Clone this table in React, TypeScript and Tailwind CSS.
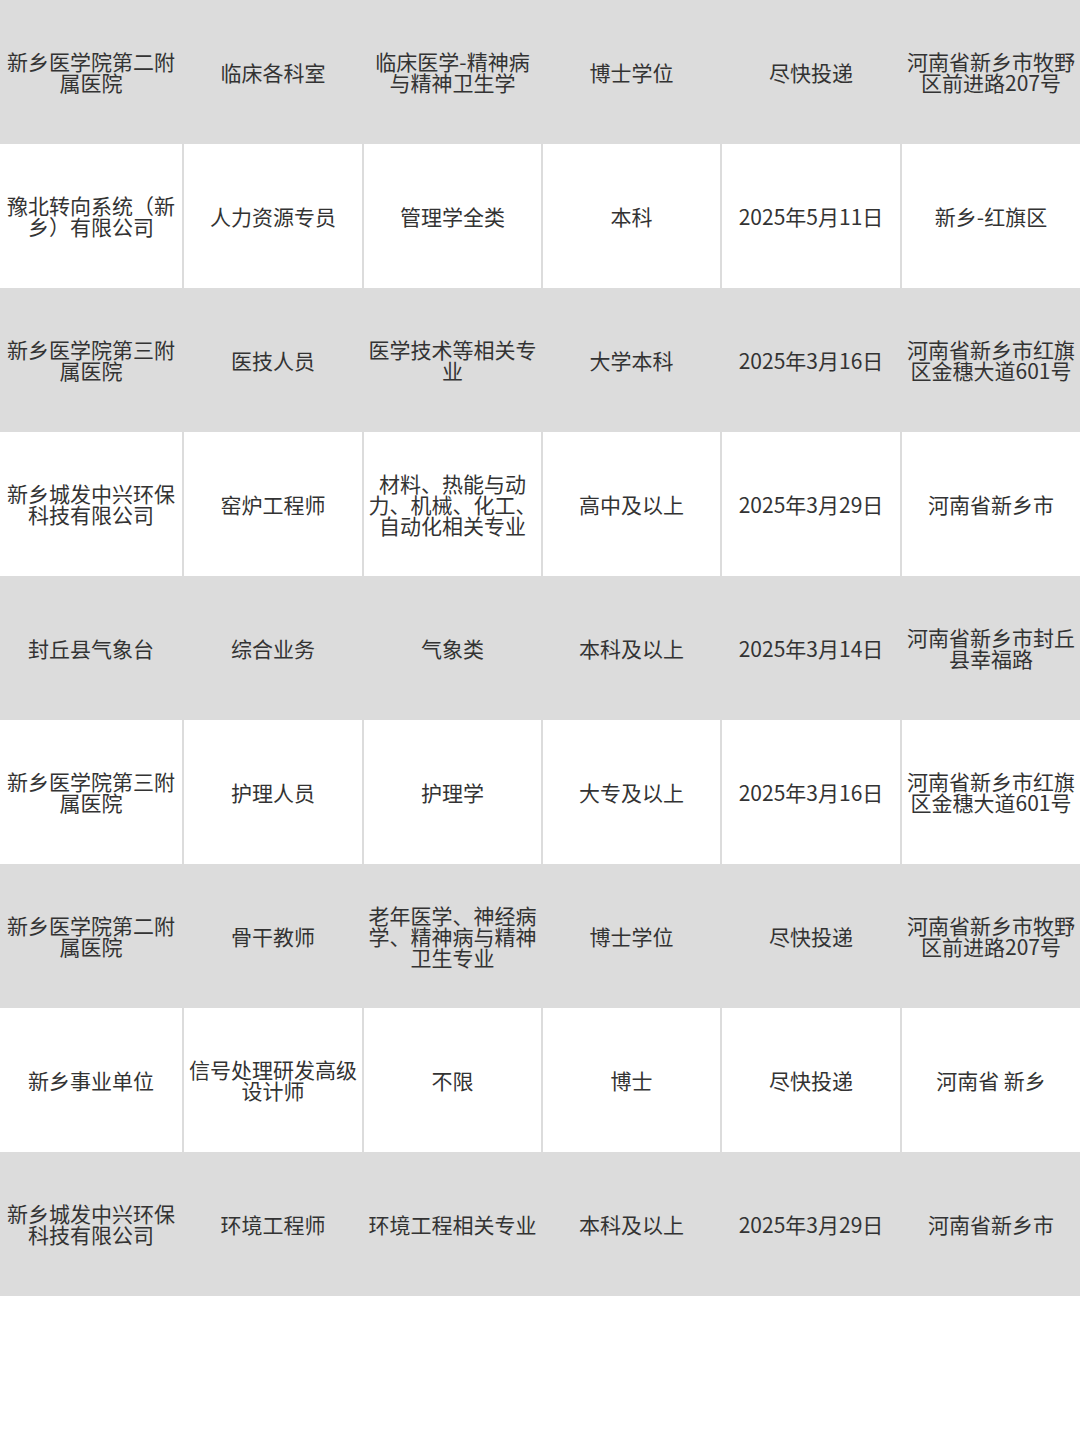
import React from "react";

const rows: string[][] = [
  ["新乡医学院第二附属医院", "临床各科室", "临床医学-精神病与精神卫生学", "博士学位", "尽快投递", "河南省新乡市牧野区前进路207号"],
  ["豫北转向系统（新乡）有限公司", "人力资源专员", "管理学全类", "本科", "2025年5月11日", "新乡-红旗区"],
  ["新乡医学院第三附属医院", "医技人员", "医学技术等相关专业", "大学本科", "2025年3月16日", "河南省新乡市红旗区金穗大道601号"],
  ["新乡城发中兴环保科技有限公司", "窑炉工程师", "材料、热能与动力、机械、化工、自动化相关专业", "高中及以上", "2025年3月29日", "河南省新乡市"],
  ["封丘县气象台", "综合业务", "气象类", "本科及以上", "2025年3月14日", "河南省新乡市封丘县幸福路"],
  ["新乡医学院第三附属医院", "护理人员", "护理学", "大专及以上", "2025年3月16日", "河南省新乡市红旗区金穗大道601号"],
  ["新乡医学院第二附属医院", "骨干教师", "老年医学、神经病学、精神病与精神卫生专业", "博士学位", "尽快投递", "河南省新乡市牧野区前进路207号"],
  ["新乡事业单位", "信号处理研发高级设计师", "不限", "博士", "尽快投递", "河南省 新乡"],
  ["新乡城发中兴环保科技有限公司", "环境工程师", "环境工程相关专业", "本科及以上", "2025年3月29日", "河南省新乡市"],
];

export default function App() {
  return (
    <div
      className="w-[1080px] h-[1444px] bg-white text-[#333333]"
      style={{ fontFamily: '"Noto Sans CJK SC", "Noto Sans", sans-serif' }}
    >
      {rows.map((r, i) => (
        <div
          key={i}
          className={
            "grid grid-cols-[182px_180px_179px_179px_180px_180px] h-[144px] " +
            (i % 2 === 0 ? "bg-[#dcdcdc]" : "bg-white")
          }
        >
          {r.map((c, j) => (
            <div
              key={j}
              className={
                "flex items-center justify-center text-center px-[3px] text-[21px] leading-[21px] font-normal " +
                (j > 0 ? "border-l-2 border-[#dcdcdc]" : "")
              }
            >
              <span>{c}</span>
            </div>
          ))}
        </div>
      ))}
    </div>
  );
}
